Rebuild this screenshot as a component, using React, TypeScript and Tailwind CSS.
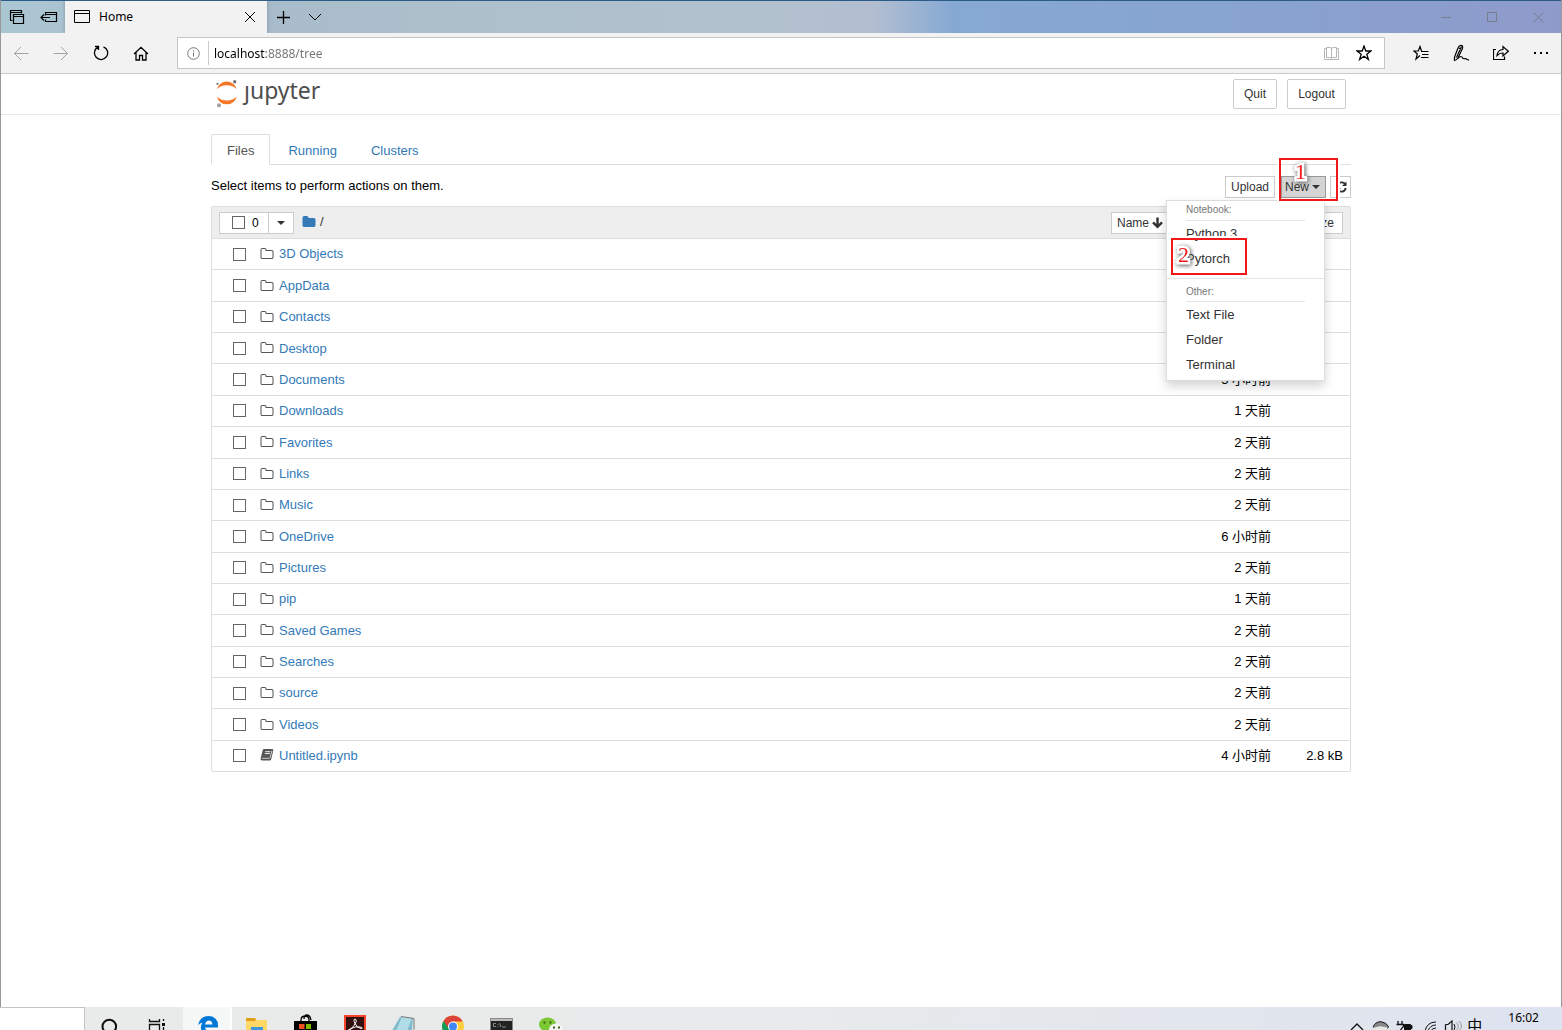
import React, { useState } from 'react';

const files = [
  { name: '3D Objects', time: '', size: '' },
  { name: 'AppData', time: '', size: '' },
  { name: 'Contacts', time: '', size: '' },
  { name: 'Desktop', time: '', size: '' },
  { name: 'Documents', time: '5 小时前', size: '' },
  { name: 'Downloads', time: '1 天前', size: '' },
  { name: 'Favorites', time: '2 天前', size: '' },
  { name: 'Links', time: '2 天前', size: '' },
  { name: 'Music', time: '2 天前', size: '' },
  { name: 'OneDrive', time: '6 小时前', size: '' },
  { name: 'Pictures', time: '2 天前', size: '' },
  { name: 'pip', time: '1 天前', size: '' },
  { name: 'Saved Games', time: '2 天前', size: '' },
  { name: 'Searches', time: '2 天前', size: '' },
  { name: 'source', time: '2 天前', size: '' },
  { name: 'Videos', time: '2 天前', size: '' },
  { name: 'Untitled.ipynb', time: '4 小时前', size: '2.8 kB', notebook: true },
];

const Icon = ({ children, size = 18, w = '1' }: { children: React.ReactNode; size?: number; w?: string }) => (
  <svg width={size} height={size} viewBox={`0 0 ${size} ${size}`} fill="none" stroke="currentColor" strokeWidth={w}>
    {children}
  </svg>
);

const Caret = () => (
  <svg width="8" height="4" viewBox="0 0 8 4" fill="currentColor">
    <path d="M0 0h8L4 4z" />
  </svg>
);

const FolderOpenIcon = () => (
  <svg width="14" height="14" viewBox="0 0 1792 1792" fill="#555">
    <path d="M1600 1312v-704q0-40-28-68t-68-28h-704q-40 0-68-28t-28-68v-64q0-40-28-68t-68-28h-320q-40 0-68 28t-28 68v960q0 40 28 68t68 28h1216q40 0 68-28t28-68zm128-704v704q0 92-66 158t-158 66h-1216q-92 0-158-66t-66-158v-960q0-92 66-158t158-66h320q92 0 158 66t66 158v32h672q92 0 158 66t66 158z" />
  </svg>
);

const FolderIcon = () => (
  <svg width="14" height="14" viewBox="0 0 1792 1792" fill="#337ab7">
    <path d="M1728 608v704q0 92-66 158t-158 66h-1216q-92 0-158-66t-66-158v-960q0-92 66-158t158-66h320q92 0 158 66t66 158v32h672q92 0 158 66t66 158z" />
  </svg>
);

const BookIcon = () => (
  <svg width="14" height="14" viewBox="0 0 14 14">
    <path d="M4 0h8.500q1.100.2.800 1.400L11.200 10.200q-.4 1.300-1.600 1.300H2.200Q.3 11.300.6 9.500L2.700 1.200Q3 .1 4 0z" fill="#555" />
    <path d="M5.200 2.700h5.200M4.700 4.600h5.200" stroke="#fff" strokeWidth="0.900" />
    <path d="M1.800 9.300h7.400q.7 0 .9-.7l1.900-7" stroke="#fff" strokeWidth="0.700" fill="none" />
  </svg>
);

const TitleBar = () => (
  <div className="flex h-[33px] border-t border-[#2b5c88] bg-[linear-gradient(to_right,#abc6d3_0%,#a9bccb_17%,#adc0cb_32%,#b2c1ce_48%,#b2bed0_56%,#86a9d3_61%,#88a4d1_78%,#8e9aca_100%)] text-black">
    <button className="flex w-8 items-center justify-center" aria-label="Tabs you've set aside">
      <Icon w="1.200">
        <path d="M4.500 12.500h-2v-10h11v3M2.500 4.500h11" />
        <path d="M5.500 6.500h10v9h-10zM5.500 8.500h10" />
      </Icon>
    </button>
    <button className="flex w-8 items-center justify-center" aria-label="Set these tabs aside">
      <Icon w="1.200">
        <path d="M5.500 7.500v-3h11v9h-11v-2M5.500 6.500h11M1 9.500h9M4 6.500l-3 3 3 3" />
      </Icon>
    </button>
    <div className="flex w-[202px] items-center bg-[#f2f2f2] pl-2 shadow-[0_0_4px_#55667788]">
      <Icon>
        <path d="M1.500 2.500h15v12h-15zM1.500 5.500h15" />
      </Icon>
      <span className="ml-2 flex-1 font-['Noto_Sans'] text-[12px]">Home</span>
      <button className="flex w-[34px] items-center justify-center" aria-label="Close tab">
        <Icon size={12}>
          <path d="M1 1l10 10M11 1L1 11" />
        </Icon>
      </button>
    </div>
    <button className="flex w-8 items-center justify-center" aria-label="New tab">
      <Icon size={15}>
        <path d="M7.500 1v13M1 7.500h13" strokeWidth="1.300" />
      </Icon>
    </button>
    <button className="flex w-8 items-center justify-center" aria-label="Tab previews">
      <Icon size={14}>
        <path d="M1 4l6 6 6-6" />
      </Icon>
    </button>
    <div className="ml-auto flex text-[#777d8c]">
      <button className="flex w-[46px] items-center justify-center" aria-label="Minimize">
        <Icon size={11}><path d="M0 5.500h10" /></Icon>
      </button>
      <button className="flex w-[46px] items-center justify-center" aria-label="Maximize">
        <Icon size={11}><path d="M.5.500h9v9h-9z" /></Icon>
      </button>
      <button className="flex w-[46px] items-center justify-center" aria-label="Close">
        <Icon size={11}><path d="M.5.500l10 10M10.500.500l-10 10" /></Icon>
      </button>
    </div>
  </div>
);

const AddressBar = () => {
  const [url, setUrl] = useState<string>('localhost:8888/tree');

  return (
    <div className="flex h-[41px] items-center border-b border-[#ccc] bg-[#f2f2f2] text-black">
      <button className="flex w-10 justify-center text-[#a3a3a3]" aria-label="Back">
        <Icon size={16}><path d="M15.500 8.500H1.500M8 2L1.500 8.500 8 15" /></Icon>
      </button>
      <button className="flex w-10 justify-center text-[#a3a3a3]" aria-label="Forward">
        <Icon size={16}><path d="M.5 8.500h14M8 2l6.500 6.500L8 15" /></Icon>
      </button>
      <button className="flex w-10 justify-center" aria-label="Refresh">
        <Icon size={16} w="1.300">
          <path d="M10.500 1.800a6.600 6.600 0 1 1-5.500.300M2 1.500h3.500V5" />
        </Icon>
      </button>
      <button className="flex w-10 justify-center" aria-label="Home">
        <Icon size={16} w="1.300">
          <path d="M1 9L8 2.300 15 9M3 7.500v7.500h3.500v-4.500h3V15H13V7.500" />
        </Icon>
      </button>
      <div className="mr-4 ml-4 flex h-8 flex-1 items-center border border-[#c6c6c6] bg-white">
        <div className="flex h-6 w-[31px] items-center justify-center border-r border-[#ccc] text-[#777]">
          <Icon size={14}>
            <circle cx="7.500" cy="7.500" r="5.800" />
            <path d="M7.500 6.500v4M7.500 4.300v1.200" />
          </Icon>
        </div>
        <input
          className="min-w-0 flex-1 bg-[linear-gradient(to_right,#000_57px,#737373_57px)] bg-clip-text pt-px pl-[5px] font-['Noto_Sans'] text-[12px] text-transparent outline-none"
          aria-label="Address"
          value={url}
          onChange={(e) => setUrl(e.target.value)}
        />
        <button className="flex w-[26px] justify-center text-[#b5b5b5]" aria-label="Reading view">
          <Icon size={16}>
            <path d="M8.500 3q-2.500-1-5-.500v10q2.500-.5 5 .500zM8.500 3q2.500-1 5-.500v10q-2.500-.5-5 .500M3.500 3.500h-2v11h14v-11h-2" />
          </Icon>
        </button>
        <button className="flex w-10 justify-center" aria-label="Add to favorites">
          <Icon size={16} w="1.300">
            <path d="M8 1l1.800 5H15l-4.200 3.200 1.600 5.300L8 11.300l-4.400 3.200 1.600-5.300L1 6h5.200z" />
          </Icon>
        </button>
      </div>
      <button className="flex w-10 justify-center" aria-label="Favorites">
        <Icon size={16} w="1.200">
          <path d="M7 10.500l-4 3.500L4.300 9 1 6h4.300L7 1.500 8.500 6M8 6.500h7.500M9 9.500h6.500M8 12.500h7.500" />
        </Icon>
      </button>
      <button className="flex w-10 justify-center" aria-label="Make a web note">
        <Icon size={18} w="1.200">
          <path d="M2.500 16.500q-.5-2.500 1-6L6 4q1.500-3.500 4-2.500 1.500 1.500-.5 5L6 14q-1.500 2-3.500 2.500zM9.500 2.500l-5 11M7 4l2 1.500" />
          <path d="M6 14.500q1.500-2 3-2 1 0 1.500 1.200t2 1 2.500.5l2 1" />
        </Icon>
      </button>
      <button className="flex w-10 justify-center" aria-label="Share">
        <Icon size={16} w="1.200">
          <path d="M3 4.500H.5v10h11v-3" />
          <path d="M4 10.500Q4.500 5 10 4.500V1.500l5.300 4.700L10 11V8Q6.500 7.800 4 10.500z" />
        </Icon>
      </button>
      <button className="flex w-10 justify-center" aria-label="Settings and more">
        <Icon size={16}>
          <path d="M1 8h2M7 8h2M13 8h2" strokeWidth="2" />
        </Icon>
      </button>
    </div>
  );
};

const Logo = () => (
  <a href="#" className="flex items-start" aria-label="jupyter">
    <svg width="24" height="30" viewBox="0 0 24 30">
      <path d="M.8 10.300a10.300 10.300 0 0 1 20 0Q17 6.300 10.800 6.300t-10 4z" fill="#f37726" />
      <path d="M.8 17.500a10.300 10.300 0 0 0 20 0Q17 21.500 10.800 21.500t-10-4z" fill="#f37726" />
      <circle cx="18.700" cy="2.700" r="1.700" fill="#767677" />
      <circle cx="1.500" cy="4.900" r="1.100" fill="#767677" />
      <circle cx="3" cy="26.300" r="2" fill="#9e9e9e" />
    </svg>
    <span className="ml-1 font-['Noto_Sans'] text-[23px] leading-[22px] text-[#4e4e4e]">ȷupyter</span>
  </a>
);

const Mark = ({ children }: { children: string }) => (
  <span className="font-['Liberation_Serif'] text-[22px] leading-6 text-[#f01818] drop-shadow-[1px_1px_2px_#555] [-webkit-text-stroke:5px_white] [paint-order:stroke_fill]">
    {children}
  </span>
);

const NewMenu = () => (
  <div className="absolute top-6 right-px z-10 w-[159px] border border-[#ddd] bg-white pb-[3px] text-[13px] text-[#333] shadow-[0_5px_10px_#0000002d]">
    <div className="mx-[19px] h-5 border-b border-[#e5e5e5] text-[10px] leading-[18px] text-[#777]">Notebook:</div>
    <button className="block h-[25px] w-full pl-[19px] text-left">Python 3</button>
    <button className="block h-[25px] w-full pl-[19px] text-left">Pytorch</button>
    <div className="mt-[7px] h-px bg-[#e5e5e5]" />
    <div className="mx-[19px] h-[23px] border-b border-[#e5e5e5] text-[10px] leading-[26px] text-[#777]">Other:</div>
    <button className="block h-[25px] w-full pl-[19px] text-left">Text File</button>
    <button className="block h-[25px] w-full pl-[19px] text-left">Folder</button>
    <button className="block h-[25px] w-full pl-[19px] text-left">Terminal</button>
    <div className="pointer-events-none absolute top-[37px] left-1 h-[37px] w-[76px] border-2 border-[#f01818] ring-2 ring-white">
      <div className="absolute top-[3px] left-[5px] flex">
        <Mark>2</Mark>
      </div>
    </div>
  </div>
);

const FileList = () => (
  <div className="mt-2 rounded-[2px] border border-[#ddd]">
    <div className="flex h-[31px] items-center bg-[#eee] px-[7px] text-[12px] text-[#333]">
      <div className="flex h-[22px] border border-[#ccc] bg-white">
        <label className="flex w-[49px] items-center border-r border-[#ccc] pl-3 text-black">
          <input type="checkbox" className="size-[13px] appearance-none border border-[#666] bg-white" />
          <span className="ml-[7px]">0</span>
        </label>
        <button className="flex w-6 items-center justify-center" aria-label="Select by type">
          <Caret />
        </button>
      </div>
      <a href="#" className="ml-2 flex items-center pb-px" aria-label="Home folder">
        <FolderIcon />
      </a>
      <span className="ml-1 pb-px text-[13px]">/</span>
      <div className="ml-auto flex gap-2">
        <button className="flex h-[22px] w-[58px] items-center border border-[#ccc] bg-white pl-[5px]">
          Name
          <svg className="ml-[3px]" width="11" height="12" viewBox="0 0 11 12" fill="none" stroke="#333" strokeWidth="2.400">
            <path d="M5.500.500v9M1 5.300l4.500 4.500L10 5.300" />
          </svg>
        </button>
        <button className="h-[22px] w-[88px] border border-[#ccc] bg-white">Last Modified</button>
        <button className="h-[22px] w-[70px] border border-[#ccc] bg-white pr-2 text-right">File size</button>
      </div>
    </div>
    <table className="h-[533px] w-full border-collapse">
      <tbody>
        {files.map((file) => (
          <tr key={file.name} className="border-t border-[#ddd]">
            <td className="p-0">
              <div className="flex items-center pl-[21px]">
                <input
                  type="checkbox"
                  aria-label={file.name}
                  className="size-[13px] appearance-none border border-[#666] bg-white"
                />
                <span className="mr-[5px] ml-[14px]">{file.notebook ? <BookIcon /> : <FolderOpenIcon />}</span>
                <a href="#" className="text-[#337ab7]">{file.name}</a>
              </div>
            </td>
            <td className="w-[120px] p-0 text-right">{file.time}</td>
            <td className="w-[79px] p-0 pr-[7px] text-right">{file.size}</td>
          </tr>
        ))}
      </tbody>
    </table>
  </div>
);

const TaskButton = ({ label, children, active }: { label: string; children: React.ReactNode; active?: boolean }) => (
  <button
    aria-label={label}
    className={active ? 'flex w-[49px] justify-center border-r-2 border-white bg-[#f6f7f7]' : 'flex w-[49px] justify-center'}
  >
    <svg width="26" height="23" viewBox="0 0 26 23">{children}</svg>
  </button>
);

const Taskbar = () => (
  <div className="flex h-[23px] shrink-0 overflow-hidden bg-[linear-gradient(to_right,#e9eaea,#e8eaeb_50%,#dde3ef)]">
    <label className="w-[85px] border-t border-r border-[#c4c4c4] bg-white">
      <input className="w-full outline-none" aria-label="Search" />
    </label>
    <TaskButton label="Cortana">
      <circle cx="12.300" cy="19.500" r="6.800" fill="none" stroke="#111" strokeWidth="2" />
    </TaskButton>
    <TaskButton label="Task view">
      <path d="M3.500 12v2.500h10V12M3.500 23v-5.500h10V23M17.500 12v2M17.500 20v3" fill="none" stroke="#111" strokeWidth="1.300" />
      <path d="M16 16h3v3h-3z" fill="#111" />
    </TaskButton>
    <TaskButton label="Edge" active>
      <path d="M4 18Q6 9 14.500 9 24 9.500 24 18.500v2H11q.5 2 2 4H8Q5.500 20 8.500 15.500 6 16 4 18zM11 17.500h7.500q-.5-4-3.500-4t-4 4z" fill="#0078d7" />
    </TaskButton>
    <TaskButton label="File Explorer">
      <path d="M2 11h9l1.500 2H23v12H2z" fill="#ffd767" />
      <path d="M2 11h9.500v3H2z" fill="#dfa017" />
      <path d="M7 20h12v4H7z" fill="#3e98dc" />
    </TaskButton>
    <TaskButton label="Store">
      <path d="M8 15v-2q0-4 4-4t4 4v2M11 12q0-4 3-4t4 5" fill="none" stroke="#000" strokeWidth="1.300" />
      <path d="M1 14h23v10H1z" fill="#000" />
      <path d="M6 17h5.500v5H6z" fill="#f25022" />
      <path d="M13 17h5v5h-5z" fill="#7fba00" />
    </TaskButton>
    <TaskButton label="Acrobat">
      <path d="M2 8h22v16H2z" fill="#f8452c" />
      <path d="M4 10h18v14H4z" fill="#31100d" />
      <path d="M13 12q-2 0 0 4.500t6 5q3-.5-1-1.500t-9 1.500-3 2.500 6-5.500 1-6.500z" fill="none" stroke="#fff" />
    </TaskButton>
    <TaskButton label="Notepad">
      <path d="M9 10l13 1.500-1 12H1z" fill="#83bdcd" />
      <path d="M11 10l10 1-5 13H5z" fill="#b0dde8" />
      <path d="M10 9.500l13 2v11" fill="none" stroke="#777" />
    </TaskButton>
    <TaskButton label="Chrome">
      <circle cx="13" cy="19.500" r="11" fill="#ffcd40" />
      <path d="M13 19.500L3.500 14Q2 16.500 2 19.500T3.500 25H13z" fill="#0f9d58" />
      <path d="M3.500 14Q6.500 8.500 13 8.500t9.700 6H13l-5 6z" fill="#db4437" />
      <circle cx="13" cy="19.500" r="5" fill="#fff" />
      <circle cx="13" cy="19.500" r="4" fill="#4285f4" />
    </TaskButton>
    <TaskButton label="Command Prompt">
      <path d="M1.500 11.500h22V24h-22z" fill="#222" stroke="#888" />
      <path d="M2 12h21v2H2z" fill="#bbb" />
      <path d="M7 16.500H4.500v3H7M9 17v.8M9 19v.8M10.500 16l1.500 4M13 20h4" fill="none" stroke="#888" />
    </TaskButton>
    <TaskButton label="WeChat">
      <ellipse cx="9.500" cy="17.500" rx="8.500" ry="7" fill="#7bc832" />
      <ellipse cx="18" cy="22.500" rx="7" ry="6" fill="#f5f5f5" />
      <path d="M5.500 15.500h2M11.500 15.500h2M15 20.500h2M20 20.500h2" stroke="#3b5f17" strokeWidth="2" />
    </TaskButton>
    <div className="ml-auto flex text-black">
      <svg width="134" height="23" viewBox="0 0 134 23" fill="none" stroke="#111">
        <path d="M3 23l6-6 6 6" strokeWidth="1.300" />
        <path d="M25.500 19.500q1-4 7-5 6 1 8 5l-1 2-7-2-6 2z" fill="#888" />
        <path d="M26 20.500l6.500-1.500 7 1.500V25H26z" fill="#e8e8e4" stroke="none" />
        <path d="M50 14v3M54 14v3M48.500 17.500h7v2q-3 3-3 4" strokeWidth="1.300" />
        <path d="M56.500 17.500h6v1h1.500v3h-1.500V24h-6z" fill="#111" />
        <path d="M77 24q2-9 11-9M80 24q2-6 8-6M83 24q1-3 5-3" />
        <path d="M97.500 17.500h2.500l4-3.500v10M97.500 17.500V24" strokeWidth="1.200" />
        <path d="M106 17q2 3 0 6" />
        <path d="M108.500 15.500q3.500 4 0 8M111 14q5 5 0 10" stroke="#999" />
      </svg>
      <span className="mt-2 -ml-[15px] font-['Noto_Sans_CJK_SC'] text-[15px] leading-5">中</span>
      <span className="mr-[23px] ml-[26px] font-['Noto_Sans'] text-[12px] leading-[21px]">16:02</span>
    </div>
  </div>
);

const App = () => {
  return (
    <div className="flex min-h-screen flex-col bg-white font-['Liberation_Sans','Noto_Sans_CJK_SC',sans-serif] text-[13px] text-black">
      <div className="flex flex-1 flex-col border-x border-[#999]">
        <TitleBar />
        <AddressBar />
        <header className="h-[41px] border-b border-[#e7e7e7]">
          <div className="mx-auto flex max-w-[1140px] items-start justify-between px-[5px] pt-[5px]">
            <Logo />
            <div className="flex gap-[10px] text-[12px] text-[#333]">
              <button className="h-[30px] w-11 rounded-[2px] border border-[#ccc]">Quit</button>
              <button className="h-[30px] w-[59px] rounded-[2px] border border-[#ccc]">Logout</button>
            </div>
          </div>
        </header>
        <main className="mx-auto mt-[19px] w-full max-w-[1140px]">
          <nav className="flex h-[31px] gap-[2px] border-b border-[#ddd] text-[#337ab7]">
            <a href="#" className="h-[31px] rounded-t-[2px] border border-b-white border-[#ddd] bg-white px-[15px] leading-8 text-[#555]">
              Files
            </a>
            <a href="#" className="px-4 leading-[34px]">Running</a>
            <a href="#" className="px-4 leading-[34px]">Clusters</a>
          </nav>
          <div className="mt-[11px] flex justify-between">
            <span className="leading-5">Select items to perform actions on them.</span>
            <div className="flex text-[12px] text-[#333]">
              <button className="h-[22px] w-[50px] border border-[#ccc]">Upload</button>
              <div className="relative ml-[6px]">
                <button className="flex h-[22px] w-[45px] items-center gap-[3px] border border-[#999] bg-[#d4d4d4] pl-[3px]">
                  New <Caret />
                </button>
                <NewMenu />
                <div className="pointer-events-none absolute -top-[18px] -left-[2px] z-20 h-[43px] w-[59px] border-2 border-[#f01818] ring-2 ring-white">
                  <div className="absolute top-0 left-[14px] flex">
                    <Mark>1</Mark>
                  </div>
                </div>
              </div>
              <button className="ml-1 flex h-[22px] w-[21px] items-center justify-center border border-[#ccc] pl-[2px]" aria-label="Refresh list">
                <svg width="11" height="12" viewBox="0 0 11 12" fill="none" stroke="#333" strokeWidth="1.800">
                  <path d="M9.500 4A4.300 4.300 0 0 0 1.300 5M1.500 8a4.300 4.300 0 0 0 8.200-1" />
                  <path d="M10.500.500v4.500H6zM.5 11.500V7H5z" fill="#333" stroke="none" />
                </svg>
              </button>
            </div>
          </div>
          <FileList />
        </main>
      </div>
      <Taskbar />
    </div>
  );
};

export default App;
